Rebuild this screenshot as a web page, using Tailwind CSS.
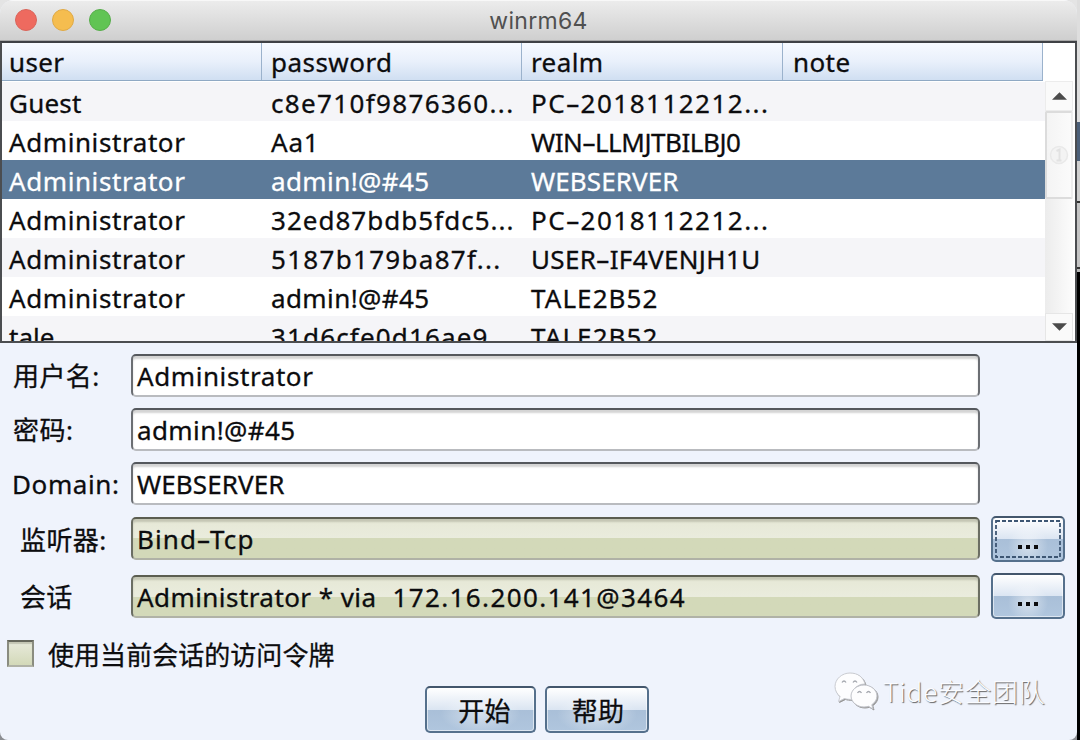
<!DOCTYPE html>
<html lang="zh">
<head>
<meta charset="utf-8">
<title>winrm64</title>
<script src="https://cdn.jsdelivr.net/npm/@tailwindcss/browser@4"></script>
</head>
<body class="w-[1080px] h-[740px] overflow-hidden bg-[#e4e4e4] font-['Noto_Sans','Noto_Sans_CJK_SC',sans-serif] text-[26px] leading-none text-[#0c0c0e] [-webkit-text-stroke:0.3px_currentColor]">
<div class="flex w-[1080px] h-[740px]">
  <div class="w-[1077px] h-[740px] shrink-0 bg-linear-to-b from-[#e4e4e4] from-50% to-[#8b8d92] to-50%">
  <main class="flex flex-col w-[1077px] h-[740px] bg-[#eff3fc] rounded-t-[14px] rounded-b-[8px] overflow-hidden">
    <header class="relative flex h-[41px] shrink-0 items-center justify-center bg-linear-to-b from-[#ececec] to-[#cfcfcf] border-t border-[#f8f8f8] border-b border-b-[#a8a8a8]">
      <div class="absolute left-[15px] top-[8px] flex gap-[15px]">
        <i class="size-[22px] rounded-full bg-[#ee6a5f] border border-[#d9655b]"></i>
        <i class="size-[22px] rounded-full bg-[#f5bd4f] border border-[#dfa945]"></i>
        <i class="size-[22px] rounded-full bg-[#61c454] border border-[#57ad4a]"></i>
      </div>
      <h1 class="font-[Inter,sans-serif] text-[23px] text-[#505050] whitespace-nowrap pt-[2px] [-webkit-text-stroke:0]"><span data-font="23px Inter" data-w="98">winrm64</span></h1>
    </header>

    <section class="flex h-[302px] shrink-0 border-2 border-t-[#3f4145] border-[#4b4d50] bg-white overflow-hidden">
      <div class="flex flex-col w-[1043px]">
        <div class="grid grid-cols-[260px_260px_261px_260px] w-[1041px] h-[38px] shrink-0 bg-linear-to-b from-[#f7faff] via-[#e9f0fb] to-[#d0dff2] border-b border-[#8fa9c4]">
          <div class="flex items-center pl-[7px] pt-px border-r border-[#9bb2cc]"><span data-w="55">user</span></div>
          <div class="flex items-center pl-[9px] pt-px border-r border-[#9bb2cc]"><span data-w="121">password</span></div>
          <div class="flex items-center pl-[9px] pt-px border-r border-[#9bb2cc]"><span data-w="72">realm</span></div>
          <div class="flex items-center pl-[10px] pt-px border-r border-[#9bb2cc]"><span data-w="57">note</span></div>
        </div>
        <div id="rows" class="mt-px"></div>
      </div>
      <div class="flex flex-col w-[30px] pt-[38px] shrink-0">
        <div class="flex h-[30px] shrink-0 items-center justify-center bg-[#fafafa] border border-[#ececec] mr-[2px]">
          <svg class="w-[15px] h-[8px]" viewBox="0 0 16 8"><path d="M0 8 8 0l8 8z" fill="#4b4b4b"/></svg>
        </div>
        <div class="flex h-[88px] shrink-0 items-center justify-center bg-linear-to-r from-[#f4f4f4] to-[#fbfbfb] border-2 border-[#dcdcdc] border-r-[#eeeeee] rounded-[2px] mr-[2px]">
          <svg class="size-[20px]" viewBox="0 0 20 20"><circle cx="10" cy="10" r="8.5" fill="#f3f3f3" stroke="#e9e9e9" stroke-width="1.5"/><path d="M7.500 6 10.500 4.500v11M7.500 15.500h5" fill="none" stroke="#e2e2e2" stroke-width="2"/></svg>
        </div>
        <div class="grow bg-linear-to-r from-[#ececec] to-[#fcfcfc] mr-[2px]"></div>
        <div class="flex h-[28px] shrink-0 items-center justify-center bg-[#fafafa] border border-[#e6e6e6] mr-[2px]">
          <svg class="w-[15px] h-[8px]" viewBox="0 0 16 8"><path d="M0 0 8 8l8-8z" fill="#4b4b4b"/></svg>
        </div>
      </div>
    </section>

    <form class="flex flex-col pt-[11px]">
      <div class="flex h-[43px] mb-[11px]">
        <label class="w-[131px] pl-[13px] flex items-center"><span data-w="86">用户名:</span></label>
        <div class="w-[849px] flex items-center pl-[4px] bg-white rounded-[5px] border-2 border-t-[#55585d] border-x-[#6b6e73] border-b-[#b9bbbf] shadow-[inset_0_3px_2px_#d4d4d4]"><span data-w="176">Administrator</span></div>
      </div>
      <div class="flex h-[43px] mb-[11px]">
        <label class="w-[131px] pl-[13px] flex items-center"><span data-w="60">密码:</span></label>
        <div class="w-[849px] flex items-center pl-[4px] bg-white rounded-[5px] border-2 border-t-[#55585d] border-x-[#6b6e73] border-b-[#b9bbbf] shadow-[inset_0_3px_2px_#d4d4d4]"><span data-w="158">admin!@#45</span></div>
      </div>
      <div class="flex h-[43px] mb-[11px]">
        <label class="w-[131px] pl-[12px] flex items-center"><span data-w="107">Domain:</span></label>
        <div class="w-[849px] flex items-center pl-[4px] bg-white rounded-[5px] border-2 border-t-[#55585d] border-x-[#6b6e73] border-b-[#b9bbbf] shadow-[inset_0_3px_2px_#d4d4d4]"><span data-w="147">WEBSERVER</span></div>
      </div>
      <div class="flex h-[48px] mb-[10px]">
        <label class="w-[131px] h-[48px] pl-[20px] flex items-center"><span data-w="86">监听器:</span></label>
        <div class="w-[849px] h-[43px] mt-px flex items-center pl-[4px] bg-linear-to-b from-[#e6e8d6] from-0% via-[#eaecdd] via-50% to-[#d3d9b9] to-50% rounded-[5px] border-2 border-t-[#5b5d50] border-x-[#6b6e63] border-b-[#b0b2a6] shadow-[inset_0_3px_2px_#c4c6b4]"><span data-w="117">Bind–Tcp</span></div>
        <div class="relative w-[74px] h-[46px] ml-[11px] flex items-center justify-center rounded-[5px] border-2 border-t-[#43566c] border-[#55708c] bg-[radial-gradient(circle_at_50%_65%,#ffffff80_0,#ffffff00_20px),linear-gradient(#fff_0%,#dbe5f2_50%,#a9bfd8_50%,#b0c6de_100%)]">
          <svg class="absolute left-px top-px w-[68px] h-[40px]" viewBox="0 0 68 40"><rect x="2" y="2" width="64" height="36" fill="none" stroke="#3d5673" stroke-width="1.800" stroke-dasharray="4 2"/></svg>
          <span class="flex gap-[4px] mt-[15px]"><i class="size-[4px] bg-[#0c0c0e]"></i><i class="size-[4px] bg-[#0c0c0e]"></i><i class="size-[4px] bg-[#0c0c0e]"></i></span>
        </div>
      </div>
      <div class="flex h-[48px] -mt-px">
        <label class="w-[131px] h-[48px] pl-[20px] flex items-center"><span data-w="52">会话</span></label>
        <div class="w-[849px] h-[43px] mt-[2px] flex items-center pl-[4px] bg-linear-to-b from-[#e6e8d6] from-0% via-[#eaecdd] via-50% to-[#d3d9b9] to-50% rounded-[5px] border-2 border-t-[#5b5d50] border-x-[#6b6e63] border-b-[#b0b2a6] shadow-[inset_0_3px_2px_#c4c6b4] whitespace-pre"><span data-w="239">Administrator * via</span><span class="ml-[16px]" data-w="293">172.16.200.141@3464</span></div>
        <div class="w-[74px] h-[46px] ml-[11px] flex items-center justify-center rounded-[5px] border-2 border-t-[#43566c] border-[#55708c] bg-[radial-gradient(circle_at_50%_65%,#ffffff80_0,#ffffff00_20px),linear-gradient(#fff_0%,#dbe5f2_50%,#a9bfd8_50%,#b0c6de_100%)] shadow-[inset_0_0_0_1px_#ffffff90]">
          <span class="flex gap-[4px] mt-[16px]"><i class="size-[4px] bg-[#0c0c0e]"></i><i class="size-[4px] bg-[#0c0c0e]"></i><i class="size-[4px] bg-[#0c0c0e]"></i></span>
        </div>
      </div>
      <div class="flex h-[40px] mt-[14px] pl-[7px] items-center">
        <i class="size-[27px] mb-[4px] border-2 border-t-[#65675c] border-[#8a8c80] border-b-[#b0b2a6] bg-linear-to-b from-[#e8eadb] to-[#d3d9b9] shadow-[inset_0_2px_1px_#c4c6b4]"></i>
        <span class="ml-[14px]" data-w="286">使用当前会话的访问令牌</span>
      </div>
    </form>

    <footer class="relative flex h-[46px] mt-[11px] pl-[425px] gap-[9px]">
      <button class="w-[111px] h-[47px] pl-[8px] pt-[2px] flex items-center justify-center rounded-[5px] border-2 border-t-[#43566c] border-[#55708c] bg-[radial-gradient(ellipse_at_50%_60%,#ffffff80_0,#ffffff00_40px),linear-gradient(#fff_0%,#dbe5f2_50%,#a9bfd8_50%,#b0c6de_100%)] shadow-[inset_0_0_0_1px_#ffffff90]"><span data-w="52">开始</span></button>
      <button class="w-[104px] h-[47px] pl-[2px] pt-[2px] flex items-center justify-center rounded-[5px] border-2 border-t-[#43566c] border-[#55708c] bg-[radial-gradient(ellipse_at_50%_60%,#ffffff80_0,#ffffff00_40px),linear-gradient(#fff_0%,#dbe5f2_50%,#a9bfd8_50%,#b0c6de_100%)] shadow-[inset_0_0_0_1px_#ffffff90]"><span data-w="52">帮助</span></button>
      <div class="absolute left-[834px] -top-[15px] flex items-center text-[#fbfcff] font-light font-['Noto_Sans_CJK_SC',sans-serif] [-webkit-text-stroke:0] [text-shadow:1px_1px_1px_#606060]">
        <svg class="w-[44px] h-[40px] mr-[5px] drop-shadow-[1px_1px_0.5px_#999]" viewBox="0 0 44 40"><path d="M16 2C8 2 1 8 1 15.500c0 4 2 7.500 5 10L4.500 30.500l6-3c2 .6 4 .9 7 .9C17 20 22 13 31 13 29 6 24 2 16 2z" fill="#fdfdfe" stroke="#c9cbd1"/><path d="M30 14c-7 0-13 5-13 11s6 11 13 11c1.500 0 3-.3 4.500-.7l4.500 2.700-1.200-4.300C41 31.500 43 28.500 43 25c0-6-6-11-13-11z" fill="#fdfdfe" stroke="#c0c2c9"/><g fill="none" stroke="#a5a8af" stroke-width="1.300"><path d="M8 11.500q2-3 4 0M19 11.500q2-3 4 0M23.500 22q2-3 4 0M32.500 22q2-3 4 0"/></g></svg>
        <span data-font="300 26px 'Noto Sans CJK SC'" data-w="162">Tide安全团队</span>
      </div>
    </footer>
  </main>
  </div>
  <aside class="flex flex-col w-[3px] bg-black">
    <i class="h-[122px] bg-[#dedede]"></i>
    <i class="h-[39px] bg-[#4c6079]"></i>
    <i class="h-[40px] bg-[#cfcfcf]"></i>
    <i class="h-[2px] bg-[#333]"></i>
    <i class="h-[64px] bg-[#c4c4c4]"></i>
    <i class="h-[2px] bg-[#333]"></i>
    <i class="h-[3px] bg-[#b8b8b8]"></i>
  </aside>
</div>
<script>
const rows = [
  ['Guest',72,'c8e710f9876360...',243,'PC–2018112212...',238],
  ['Administrator',176,'Aa1',48,'WIN–LLMJTBILBJ0',209],
  ['Administrator',176,'admin!@#45',158,'WEBSERVER',147],
  ['Administrator',176,'32ed87bdb5fdc5...',243,'PC–2018112212...',238],
  ['Administrator',176,'5187b179ba87f...',230,'USER–IF4VENJH1U',229],
  ['Administrator',176,'admin!@#45',158,'TALE2B52',127],
  ['tale',45,'31d6cfe0d16ae9',217,'TALE2B52',127],
];
document.getElementById('rows').innerHTML = rows.map((r, i) => `
  <div class="grid grid-cols-[260px_260px_523px] h-[39px] items-center ${i === 2 ? 'bg-[#5c7a99] text-white' : i % 2 ? 'bg-white' : 'bg-[#f5f5f8]'}">
    <div class="pl-[7px] pt-[3px]"><span data-w="${r[1]}">${r[0]}</span></div>
    <div class="pl-[9px] pt-[3px]"><span data-w="${r[3]}">${r[2]}</span></div>
    <div class="pl-[9px] pt-[3px]"><span data-w="${r[5]}">${r[4]}</span></div>
  </div>`).join('');
// Track each label so that it fills its width.
const pen = document.createElement('canvas').getContext('2d');
document.querySelectorAll('[data-w]').forEach(el => {
  pen.font = el.dataset.font || "26px 'Noto Sans', 'Noto Sans CJK SC'";
  const text = el.textContent;
  el.style.display = 'inline-block';
  el.style.whiteSpace = 'pre';
  el.style.letterSpacing = (Number(el.dataset.w) + 0.5 - pen.measureText(text).width) / text.length + 'px';
});
</script>
</body>
</html>
